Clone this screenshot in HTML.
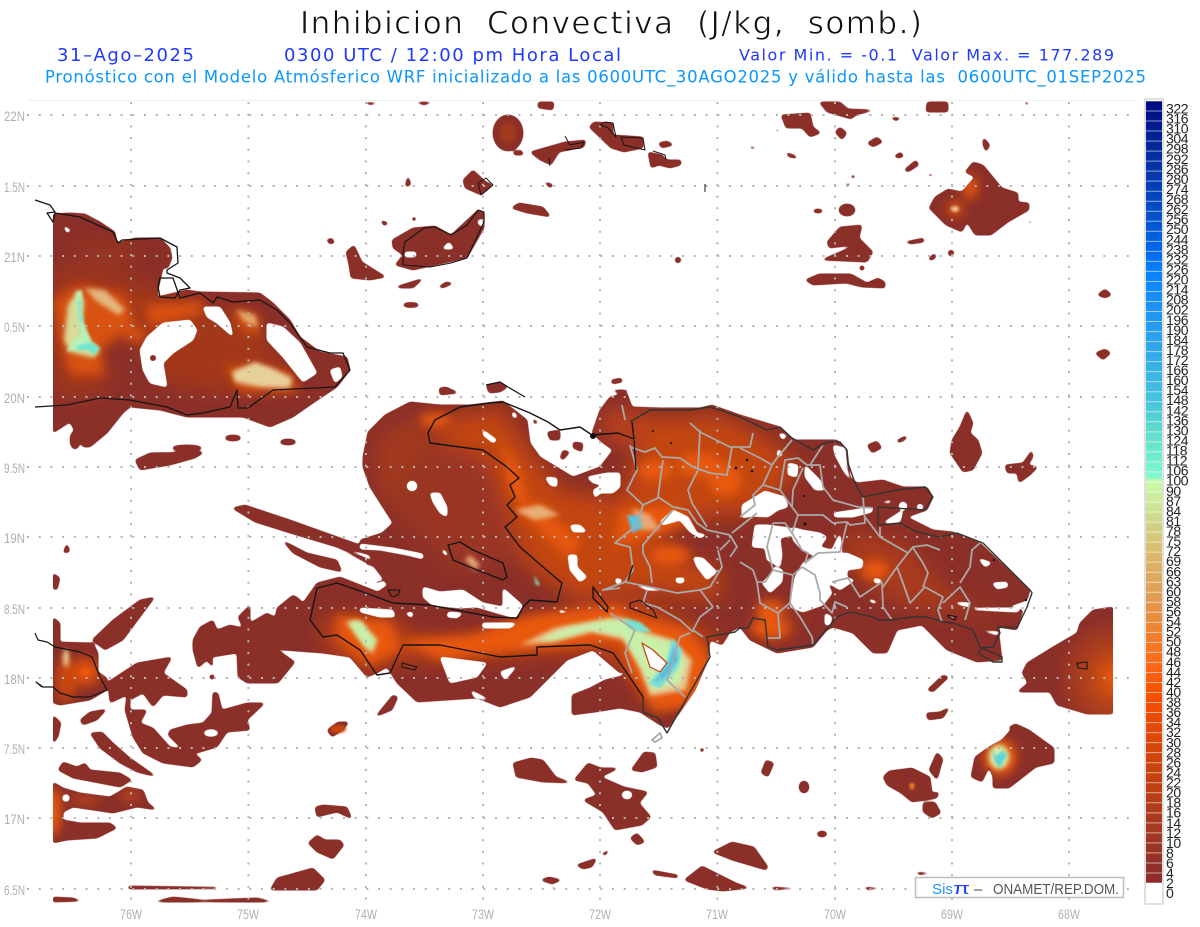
<!DOCTYPE html>
<html><head><meta charset="utf-8"><title>Inhibicion Convectiva</title>
<style>html,body{margin:0;padding:0;background:#fff}svg{display:block}text{font-family:"Liberation Sans",sans-serif;white-space:pre}.d{font-family:"DejaVu Sans",sans-serif}</style></head>
<body>
<svg width="1200" height="927" viewBox="0 0 1200 927" xmlns="http://www.w3.org/2000/svg">
<defs>
<filter id="sm" filterUnits="userSpaceOnUse" x="0" y="90" width="1200" height="830" color-interpolation-filters="sRGB"><feGaussianBlur stdDeviation="1.6"/><feComponentTransfer><feFuncA type="linear" slope="5" intercept="-1.4"/></feComponentTransfer></filter>
<filter id="b1" x="-30%" y="-30%" width="160%" height="160%"><feGaussianBlur stdDeviation="1.2"/></filter>
<filter id="b2" x="-30%" y="-30%" width="160%" height="160%"><feGaussianBlur stdDeviation="2.5"/></filter>
<filter id="b5" x="-30%" y="-30%" width="160%" height="160%"><feGaussianBlur stdDeviation="5"/></filter>
<filter id="b10" x="-30%" y="-30%" width="160%" height="160%"><feGaussianBlur stdDeviation="10"/></filter>
<clipPath id="plot"><rect x="53" y="101" width="1060" height="802"/></clipPath>
<linearGradient id="lg" gradientUnits="userSpaceOnUse" x1="0" y1="101" x2="0" y2="883">
<stop offset="0" stop-color="#000a80"/><stop offset=".064" stop-color="#052a9c"/><stop offset=".128" stop-color="#0448bf"/><stop offset=".192" stop-color="#0068e8"/><stop offset=".218" stop-color="#0a80ff"/><stop offset=".256" stop-color="#1a90f5"/><stop offset=".32" stop-color="#30a8ea"/><stop offset=".385" stop-color="#48c4dc"/><stop offset=".423" stop-color="#60dccc"/><stop offset=".48" stop-color="#80f8d0"/><stop offset=".487" stop-color="#ccfaa8"/><stop offset=".54" stop-color="#d0d488"/><stop offset=".577" stop-color="#dcba6c"/><stop offset=".64" stop-color="#e09a50"/><stop offset=".68" stop-color="#ee8030"/><stop offset=".72" stop-color="#fa6a18"/><stop offset=".756" stop-color="#f85000"/><stop offset=".808" stop-color="#e04808"/><stop offset=".872" stop-color="#c04010"/><stop offset=".923" stop-color="#a83a20"/><stop offset="1" stop-color="#8a2c2c"/>
</linearGradient>
<radialGradient id="pr" gradientUnits="userSpaceOnUse" cx="1116" cy="678" r="62"><stop offset="0" stop-color="#ea5a0a"/><stop offset=".45" stop-color="#b4421a"/><stop offset="1" stop-color="#8b2f29"/></radialGradient>
<path id="island" d="M363,457 368,432 385,415 410,402 440,405 470,405 503,401 527,420 530,443 540,457 573,477 600,467 613,450 603,443 592,433 600,410 610,397 627,393 632,407 660,408 700,408 712,405 740,415 780,427 793,440 837,440 847,450 850,477 857,483 883,480 903,487 927,487 933,497 927,510 907,517 933,530 953,532 980,543 1030,590 1027,600 1007,607 1023,610 1017,630 998,627 1002,660 977,662 947,650 922,625 897,630 887,653 873,653 853,633 833,627 827,630 813,647 777,653 750,640 740,627 730,632 722,645 710,640 708,660 695,690 680,712 668,728 660,725 640,712 620,708 595,712 572,715 572,695 590,688 605,680 622,676 628,670 620,673 593,650 567,660 550,677 530,697 500,707 477,698 417,702 397,683 387,667 377,673 367,677 350,657 323,653 283,650 277,647 273,630 277,608 293,595 298,598 303,603 317,583 340,577 378,592 388,585 375,570 370,555 360,552 360,540 382,533 393,523 370,487 363,467Z"/>
<path id="cuba" d="M53,214 70,213 85,214 100,222 115,232 117,243 135,238 160,238 170,248 172,258 168,268 163,268 158,290 157,297 187,290 200,292 260,293 273,303 290,320 300,337 320,352 347,357 350,370 337,387 313,403 293,417 270,427 243,417 187,417 160,410 130,407 123,413 107,433 90,447 83,447 70,422 53,433Z"/>
<path id="jam" d="M53,642 93,643 98,653 98,672 107,678 107,690 90,700 60,705 53,703Z"/>
<path id="ne" d="M965,172 973,162 983,165 1002,188 1018,193 1018,202 1029,203 1029,210 1008,222 991,235 975,235 967,222 962,232 946,225 929,208 935,197 948,189 962,192 975,177Z"/>
<path id="se" d="M1016,724 1029,730 1054,748 1054,763 1036,767 1009,788 993,788 993,777 989,767 982,782 971,777 975,757 989,747 1002,740Z"/>
<path id="sl" d="M53,782 63,788 80,793 110,797 127,787 143,790 148,803 157,810 137,807 113,813 73,807 63,812 63,820 80,823 110,823 117,828 97,838 67,840 53,843Z"/>
<clipPath id="ci"><use href="#island"/></clipPath>
<clipPath id="cc"><use href="#cuba"/></clipPath>
<clipPath id="cj"><use href="#jam"/></clipPath>
<clipPath id="cn"><use href="#ne"/></clipPath>
<clipPath id="cs"><use href="#se"/></clipPath>
<clipPath id="cl"><use href="#sl"/></clipPath>
</defs>

<rect width="1200" height="927" fill="#fff"/>

<!-- header -->
<text class="d" x="300" y="33.5" font-size="31" textLength="622" lengthAdjust="spacing" fill="#111" stroke="#fff" stroke-width=".7">Inhibicion  Convectiva  (J/kg,  somb.)</text>
<g font-size="18" fill="#2038ff" class="d">
<text class="d" x="57" y="61" textLength="137" lengthAdjust="spacing">31–Ago–2025</text>
<text class="d" x="284" y="61" textLength="337" lengthAdjust="spacing">0300 UTC / 12:00 pm Hora Local</text>
<text class="d" x="739" y="60.5" font-size="16" textLength="375" lengthAdjust="spacing">Valor Min. = -0.1  Valor Max. = 177.289</text>
</g>
<text class="d" x="45" y="82.5" font-size="16.5" fill="#0a96ff" textLength="1101" lengthAdjust="spacing">Pronóstico con el Modelo Atmósferico WRF inicializado a las 0600UTC_30AGO2025 y válido hasta las  0600UTC_01SEP2025</text>
<line x1="28" y1="100.5" x2="1136" y2="100.5" stroke="#f0f0f0"/>

<!-- base land -->
<g clip-path="url(#plot)">
<g filter="url(#sm)">
<g fill="#8b2f29">
<use href="#island"/><use href="#cuba"/><use href="#jam"/><use href="#ne"/><use href="#se"/><use href="#sl"/>
<path d="M232,508 245,505 290,520 360,545 360,552 340,548 290,533 255,522Z"/>
<path d="M282,540 307,553 337,560 342,572 320,567 293,553Z"/>
<path d="M320,540 363,557 397,573 377,583 367,563 337,547Z"/>
<path d="M135,460 150,453 205,452 195,458 170,465 140,470Z"/>
<path d="M53,617 60,623 60,642 53,642Z"/>
<path d="M53,573 60,578 57,590 53,589Z"/>
<path d="M67,543 70,552 63,553Z"/>
<path d="M92,640 113,620 140,600 155,597 143,613 123,640 105,650Z"/>
<path d="M108,682 137,663 172,657 163,673 187,690 187,697 163,695 153,707 143,693 130,700 130,710 147,710 140,723 153,728 170,747 190,750 202,760 193,767 163,763 143,753 133,737 125,710 127,695 110,703Z"/>
<path d="M80,720 90,712 107,709 97,720 83,725Z"/>
<path d="M53,715 61,723 58,737 53,744Z"/>
<path d="M90,733 102,732 113,743 130,758 157,777 137,772 120,763 100,748Z"/>
<path d="M170,730 187,725 203,723 212,713 213,692 218,693 222,710 247,703 265,703 247,720 250,730 227,732 217,747 197,753 180,747 168,735Z"/>
<path d="M193,640 200,627 213,620 217,630 230,625 243,628 238,617 250,605 250,623 267,613 280,620 272,633 278,650 295,662 278,683 247,683 238,677 237,653 212,657 213,668 207,660 198,668 193,650Z"/>
<path d="M58,770 63,762 77,767 85,763 90,770 120,773 132,780 120,787 73,778Z"/>
<path d="M315,807 323,805 347,807 352,819 337,812 317,817Z"/>
<path d="M308,843 317,835 325,840 340,840 344,845 333,859 317,852Z"/>
<path d="M270,890 277,878 313,868 325,880 317,890Z"/>
<path d="M128,886 217,887 217,889 128,889Z"/>
<path d="M53,897 73,898 83,901 53,902Z"/>
<path d="M152,902 173,897 203,900 257,898 275,902Z"/>
<path d="M327,730 338,722 349,722 343,730 332,737Z"/>
<path d="M375,717 393,695 398,697 392,710Z"/>
<path d="M547,432 560,430 560,440 550,440Z"/><path d="M563,450 570,452 563,460 560,458Z"/><path d="M573,442 583,443 582,452 573,448Z"/><path d="M532,418 538,422 535,425Z"/>
<!-- east -->
<path d="M967,410 973,423 970,433 978,440 982,453 973,470 963,472 950,453 952,440 960,427Z"/>
<path d="M867,445 877,441 882,448 872,453Z"/><path d="M897,440 908,435 905,440 898,443Z"/>
<path d="M1005,465 1023,463 1032,450 1033,457 1028,465 1038,467 1030,475 1019,483 1017,473 1007,473Z"/>
<path d="M927,690 943,675 949,677 933,692Z"/>
<path d="M926,713 940,712 950,707 943,718 928,720Z"/>
<path d="M1007,728 1015,724 1023,729Z"/>
<!-- south -->
<path d="M513,763 531,758 543,760 556,777 572,783 543,782 516,777Z"/>
<path d="M574,780 588,763 601,768 619,768 601,777 624,787 648,792 639,803 651,817 642,825 615,830 603,812 583,800 597,795 588,783Z"/>
<path d="M631,770 644,752 655,753 657,767 642,772Z"/>
<path d="M630,838 637,833 645,842 637,845Z"/>
<path d="M712,852 732,842 754,847 768,867 766,870 732,860Z"/>
<path d="M576,865 597,858 592,867 583,869Z"/><path d="M600,855 610,849 606,855Z"/>
<path d="M651,870 678,875 678,878 655,875Z"/>
<path d="M684,880 702,866 736,883 750,888 723,891 707,889Z"/>
<path d="M540,880 549,877 562,880 552,884Z"/><path d="M549,887 565,888 552,889Z"/>
<path d="M769,887 806,888 775,890Z"/><path d="M862,887 885,888 868,890Z"/><path d="M914,872 934,873 920,875Z"/>
<path d="M883,777 889,771 912,768 930,777 932,793 939,792 937,798 925,800 912,802 901,793 887,785Z"/>
<path d="M923,803 935,802 941,813 932,818 923,812Z"/>
<path d="M761,773 766,760 774,763 768,777Z"/>
<path d="M929,770 937,752 943,759 937,780Z"/>
<ellipse cx="804" cy="787" rx="5" ry="6"/><ellipse cx="822" cy="834" rx="5" ry="3"/><circle cx="702" cy="750" r="2"/><circle cx="212" cy="677" r="2.5"/>
<ellipse cx="75" cy="440" rx="5" ry="9"/><ellipse cx="233" cy="438" rx="8" ry="3"/><ellipse cx="288" cy="442" rx="8" ry="3"/><ellipse cx="187" cy="448" rx="15" ry="3"/>
<!-- north -->
<path d="M362,102 381,103 370,105Z"/><path d="M413,102 435,102 424,105Z"/><path d="M538,102 554,102 553,110 538,108Z"/>
<ellipse cx="508" cy="133" rx="15" ry="18"/>
<path d="M513,152 521,150 524,155 514,155Z"/>
<path d="M530,152 565,142 586,140 584,147 559,152 551,165 540,160Z"/>
<path d="M589,127 594,122 613,123 613,135 643,137 643,148 624,152 611,148Z"/>
<path d="M658,143 667,141 674,145 662,148Z"/>
<path d="M648,152 662,155 667,160 681,160 681,165 670,168 659,165 651,168Z"/>
<path d="M408,175 411,185 405,187Z"/>
<path d="M473,170 486,182 493,185 481,195 465,188 463,180Z"/>
<path d="M543,181 554,185 550,188Z"/>
<path d="M511,208 519,203 543,207 551,217 527,213Z"/>
<path d="M392,240 413,228 435,226 451,235 478,210 484,212 484,228 467,258 435,265 413,270 395,265 403,255 393,248Z"/>
<path d="M346,252 354,245 362,262 386,277 370,280 351,278 349,265Z"/>
<path d="M326,240 332,238 335,243 330,244Z"/>
<path d="M380,220 389,223 384,226Z"/><circle cx="414" cy="219" r="2"/>
<path d="M395,287 424,278 413,288 400,288Z"/>
<path d="M438,287 446,282 454,283 443,288Z"/>
<ellipse cx="411" cy="305" rx="8" ry="2.5"/>
<path d="M486,385 500,382 508,387 500,392 489,393Z"/>
<path d="M439,388 446,387 459,393 440,395Z"/>
<path d="M611,380 621,378 623,382 612,384Z"/><path d="M611,390 630,390 621,394Z"/>
<path d="M819,102 840,102 848,109 875,110 856,115 851,119 827,112Z"/>
<path d="M927,102 948,102 948,112 926,112Z"/>
<path d="M1024,102 1029,102 1027,106Z"/>
<path d="M889,117 902,118 896,121Z"/>
<path d="M781,115 810,113 813,127 821,133 810,137 802,128 786,128Z"/>
<path d="M773,129 781,130 778,132Z"/>
<path d="M835,132 840,127 847,133 842,140Z"/>
<path d="M867,143 877,137 883,142 873,147Z"/>
<path d="M749,146 759,148 751,149Z"/>
<path d="M785,152 794,155 799,159 789,157Z"/>
<path d="M894,156 901,152 904,157 897,158Z"/>
<path d="M904,170 916,160 919,165 908,172Z"/>
<path d="M928,174 935,174 929,177Z"/>
<path d="M850,177 854,174 855,179Z"/>
<path d="M845,184 851,183 848,187Z"/>
<path d="M983,137 990,145 986,152 983,145Z"/>
<path d="M1027,223 1034,219 1030,224Z"/>
<path d="M904,242 924,238 924,242 911,244Z"/>
<path d="M929,258 935,253 936,258 929,261Z"/>
<circle cx="951" cy="253" r="3"/>
<ellipse cx="847" cy="210" rx="8" ry="6"/><ellipse cx="818" cy="211" rx="5" ry="2"/>
<path d="M827,242 840,227 862,225 859,238 873,252 867,262 821,260 856,245 829,248Z"/>
<circle cx="862" cy="268" r="2.5"/>
<path d="M805,280 819,274 851,274 867,283 878,278 885,282 885,288 862,287 846,283 813,285Z"/>
<path d="M1097,295 1105,289 1112,295 1105,298Z"/>
<path d="M1095,353 1105,349 1111,353 1103,360Z"/>
<circle cx="678" cy="260" r="3"/>
</g>
<!-- Puerto Rico gradient lobe -->
<path d="M1113,607 1093,610 1080,623 1077,633 1053,647 1027,663 1022,673 1028,683 1017,692 1050,692 1057,705 1087,714 1113,714Z" fill="url(#pr)"/>
</g>

<!-- island heat -->
<g clip-path="url(#ci)">
<g filter="url(#b10)">
<path fill="#a63a1c" opacity=".55" d="M385,425 430,415 510,470 525,560 450,570 400,520Z"/>
<path fill="#c8470f" opacity=".92" d="M440,420 500,408 530,450 560,490 620,500 640,450 640,420 720,415 770,440 800,470 760,510 690,520 650,550 720,570 720,600 640,590 580,600 530,570 510,520 490,460 440,440Z"/>
<path fill="#c8470f" opacity=".9" d="M400,640 480,640 580,610 640,600 720,640 700,700 650,705 630,670 590,650 480,655 400,660Z"/>
<path fill="#c8470f" opacity=".9" d="M320,620 395,620 410,640 395,660 360,670 330,650Z"/>
<path fill="#a93b1a" d="M840,530 900,540 960,600 1000,620 900,605 850,570Z"/>
<path fill="#b8401a" d="M600,410 650,410 640,450 605,440Z"/>
<path fill="#a83a1c" d="M770,620 800,600 790,640 760,640Z"/>
<path fill="#a53a1c" d="M375,445 410,425 430,440 400,470 400,510 380,490Z"/>
</g>
<g filter="url(#b5)" fill="#e8590a">
<ellipse cx="435" cy="420" rx="16" ry="7"/>
<path d="M500,440 520,470 530,510 555,520 580,540 570,560 540,530 510,490Z"/>
<ellipse cx="535" cy="512" rx="16" ry="7"/>
<path d="M620,510 670,505 690,520 640,540 615,545Z"/>
<ellipse cx="700" cy="465" rx="22" ry="12"/><ellipse cx="655" cy="470" rx="18" ry="10"/><ellipse cx="725" cy="480" rx="16" ry="16"/>
<ellipse cx="670" cy="555" rx="20" ry="10"/><ellipse cx="770" cy="610" rx="14" ry="10"/><ellipse cx="770" cy="628" rx="20" ry="10"/>
<ellipse cx="875" cy="570" rx="14" ry="10"/>
<path d="M400,640 470,635 530,615 620,605 625,640 530,650 440,660Z"/>
<path d="M335,615 390,622 400,650 370,665 340,640Z"/>
<path d="M612,610 690,630 712,665 695,705 655,712 630,675Z"/>
</g>
<g filter="url(#b2)">
<path fill="#e8b078" d="M515,510 540,505 560,515 535,520Z"/>
<path fill="#e8a878" d="M470,555 480,565 475,570 465,560Z"/>
<path fill="#e8c890" d="M520,645 555,628 610,618 622,618 640,630 672,640 692,660 686,690 650,696 640,668 625,640 592,632 552,642Z"/>
<path fill="#d8dc98" d="M346,622 358,620 378,640 372,654 360,640Z"/>
<path fill="#e8a878" d="M632,508 650,515 660,530 640,530Z"/>
</g>
<g filter="url(#b2)">
<path fill="#c8f0a8" d="M540,640 565,628 610,620 625,620 645,635 672,642 686,662 680,684 652,690 640,666 622,636 590,630 555,640Z"/>
<path fill="#c8f0a8" d="M350,622 362,622 374,642 368,650 358,636Z"/>
</g>
<g filter="url(#b1)">
<path fill="#78e0d0" d="M625,618 640,622 652,632 640,632 628,628Z"/>
<path fill="#78dcd8" d="M672,638 682,650 678,668 660,688 648,684 666,664Z"/>
<path fill="#52bce0" d="M675,644 678,660 664,678 654,682 668,664Z"/>
<path fill="#58c4e0" d="M627,515 640,516 642,528 632,533 630,525Z"/>
<path fill="#78e8d0" d="M534,575 540,585 536,585Z"/>
</g>
</g>

<!-- Cuba heat -->
<g clip-path="url(#cc)">
<g filter="url(#b10)">
<path fill="#c8470f" opacity=".4" d="M53,270 130,280 210,310 250,320 300,385 235,392 170,385 130,330 100,340 110,390 60,395 53,360Z"/>
<path fill="#a93b1a" opacity=".5" d="M75,245 140,245 130,265 80,265Z"/>
</g>
<g filter="url(#b5)" fill="#ea5a0a" opacity=".75">
<path d="M53,300 80,285 125,295 135,325 100,350 105,375 70,375 60,340Z"/>
<path d="M145,305 205,300 200,315 150,326Z"/>
<path d="M225,365 290,372 300,392 240,392Z"/>
<path d="M232,308 260,315 258,338 240,328Z"/>
<ellipse cx="135" cy="335" rx="10" ry="8"/>
</g>
<g filter="url(#b2)">
<path fill="#e8c890" opacity=".85" d="M85,288 105,290 125,310 118,315 95,300Z"/>
<path fill="#e8d09a" d="M232,372 255,362 272,368 292,378 290,388 260,387 235,382Z"/>
<path fill="#e8b878" opacity=".85" d="M236,310 255,315 258,327 245,322Z"/>
<path fill="#d8dc98" d="M68,305 78,290 84,300 82,335 100,350 94,358 70,352 64,340Z"/>
</g>
<g filter="url(#b1)">
<path fill="#b8f0b8" d="M76,292 82,290 82,318 92,342 98,346 90,350 72,350 66,352 74,340 80,335 78,315Z"/>
<path fill="#70e8d0" d="M78,300 81,300 81,317 84,318 82,323 79,318Z"/>
<path fill="#70e8d0" d="M76,346 90,342 100,348 94,355 88,350 78,350Z"/>
</g>
</g>

<!-- other heat -->
<g clip-path="url(#cj)"><g filter="url(#b5)"><ellipse cx="85" cy="672" rx="16" ry="14" fill="#d84e10"/><ellipse cx="66" cy="680" rx="10" ry="22" fill="#c8470f"/></g><g filter="url(#b2)"><ellipse cx="66" cy="658" rx="3" ry="9" fill="#f0d090"/><ellipse cx="85" cy="672" rx="5" ry="4" fill="#f05c0a"/></g></g>
<g clip-path="url(#cl)"><g filter="url(#b5)"><ellipse cx="53" cy="812" rx="8" ry="24" fill="#ea5a0a"/><ellipse cx="85" cy="800" rx="14" ry="5" fill="#b8421a"/><ellipse cx="130" cy="795" rx="10" ry="6" fill="#b8421a"/></g></g>
<g clip-path="url(#cn)"><g filter="url(#b5)"><ellipse cx="970" cy="187" rx="8" ry="12" fill="#e0520c"/><ellipse cx="955" cy="209" rx="8" ry="8" fill="#d84e10"/></g><g filter="url(#b1)"><ellipse cx="955" cy="209" rx="4" ry="3" fill="#f0c080"/></g></g>
<g clip-path="url(#cs)"><g filter="url(#b5)"><ellipse cx="1000" cy="757" rx="16" ry="18" fill="#f0600a"/></g><g filter="url(#b2)"><ellipse cx="999" cy="757" rx="10" ry="12" fill="#d8ecA0"/></g><g filter="url(#b1)"><path d="M992,748 996,756 1003,750 1007,755 1000,768 995,762Z" fill="#60d4d8"/></g></g>
<ellipse cx="912" cy="786" rx="2.5" ry="3.5" fill="#f08020" filter="url(#b1)"/>
<ellipse cx="338" cy="729" rx="8" ry="4" fill="#c8470f" filter="url(#b1)"/>
<ellipse cx="508" cy="133" rx="8" ry="10" fill="#a33a1e" filter="url(#b2)"/>

<!-- holes -->
<g filter="url(#sm)" fill="#fff">
<path d="M483,430 497,440 493,443 483,435Z"/><path d="M512,410 518,417 513,418Z"/>
<circle cx="412" cy="486" r="5"/>
<path d="M430,493 440,493 447,507 447,517 440,513 433,502Z"/>
<path d="M448,460 457,461 452,462Z"/>
<path d="M545,477 557,478 557,487 550,485Z"/>
<path d="M587,477 607,473 620,473 620,487 613,493 600,493 595,498 593,490 603,485 593,483Z"/>
<path d="M570,525 580,525 587,532 573,532Z"/>
<path d="M568,555 577,555 577,567 587,577 580,582 570,570Z"/>
<path d="M442,548 447,553 448,557 443,553Z"/>
<path d="M423,587 440,592 463,590 483,603 503,607 503,588 520,603 523,607 515,618 497,613 477,607 460,608 432,605 423,597Z"/>
<path d="M482,623 517,623 510,628 483,628Z"/>
<path d="M448,612 463,613 457,618 447,617Z"/>
<path d="M405,613 413,612 412,618Z"/>
<path d="M360,608 393,610 395,617 380,617 360,612Z"/>
<path d="M558,610 572,612 560,613Z"/>
<path d="M360,563 373,567 383,580 373,582 360,578Z"/>
<path d="M360,544 393,548 423,554 423,559 407,555 380,550 360,549Z"/>
<path d="M615,578 623,580 617,585Z"/>
<path d="M630,583 647,587 670,592 647,590Z"/>
<path d="M660,522 673,510 688,517 697,533 707,535 700,538 690,532 680,520 663,525Z"/>
<path d="M693,557 703,558 717,572 707,580 697,567Z"/>
<path d="M675,578 685,578 683,583 677,583Z"/>
<path d="M742,505 755,497 765,491 785,497 788,507 778,510 768,517 752,516 742,518Z"/>
<path d="M755,525 768,525 790,528 793,535 780,538 782,555 780,567 767,560 765,548 752,547Z"/>
<path d="M792,527 802,530 820,533 827,537 820,547 832,550 840,533 842,552 813,555 802,550 793,540Z"/>
<path d="M813,557 847,553 863,560 862,568 847,570 847,578 855,580 840,590 827,582 832,593 823,605 803,612 790,607 795,577 803,563Z"/>
<path d="M773,567 783,570 782,582 770,593 762,583 773,572Z"/>
<path d="M805,465 820,480 825,490 815,490 805,477Z"/>
<path d="M788,463 798,465 797,477 788,475Z"/>
<path d="M778,448 783,455 777,457Z"/><path d="M778,433 787,435 783,440Z"/>
<path d="M833,445 845,448 847,470 852,483 843,470 835,455Z"/>
<path d="M833,513 873,507 872,512 853,517 835,517Z"/>
<path d="M877,503 892,500 890,503Z"/>
<path d="M883,523 903,510 900,522 893,523Z"/>
<circle cx="903" cy="506" r="4"/><circle cx="920" cy="507" r="3"/>
<path d="M992,583 1007,582 1008,587 997,589Z"/>
<path d="M978,558 992,563 985,567Z"/>
<path d="M953,602 970,603 970,607 960,605Z"/>
<path d="M972,608 1022,608 1017,612 975,610Z"/>
<path d="M978,630 1000,632 997,635Z"/>
<path d="M867,598 880,603 872,603Z"/>
<path d="M873,578 882,580 880,583 875,583Z"/>
<path d="M825,613 832,617 830,625 825,625Z"/>
<path d="M440,657 487,663 477,677 450,683Z"/>
<path d="M500,672 517,666 505,680Z"/>
<path d="M470,690 490,700 475,698Z"/>
<path d="M140,350 147,337 163,323 190,320 197,330 193,340 173,353 163,363 167,387 150,383 143,370Z"/>
<path d="M203,307 220,307 230,323 233,337 217,323 207,317Z"/>
<path d="M267,323 283,327 300,343 317,373 303,382 283,357 267,340Z"/>
<path d="M330,370 340,367 342,377 335,383Z"/>
<path d="M160,288 168,286 166,292Z"/>
<path d="M63,225 70,230 74,228 67,233Z"/>
<circle cx="66" cy="798" r="3.5"/>
<ellipse cx="211" cy="733" rx="7" ry="3.2"/>
<ellipse cx="627" cy="795" rx="5" ry="4"/>
<path d="M442,249 449,242 454,249Z M405,252 416,252 416,257 405,257Z M477,222 482,218 483,228Z"/>
</g>
<circle cx="153" cy="358" r="3" fill="#8b2f29"/>
<path d="M642,643 653,650 667,663 660,672 650,667Z" fill="#fff" stroke="#c8400c" stroke-width="1.2" stroke-linejoin="round"/>
</g>

<!-- grid -->
<g stroke="#b4b4b4" stroke-width="2" stroke-dasharray="2 9.7" fill="none">
<path d="M27,115H1136M27,186H1136M27,256H1136M27,326H1136M27,397H1136M27,467H1136M27,537H1136M27,608H1136M27,678H1136M27,748H1136M27,818H1136M27,889H1136"/>
<path d="M131,102V905M248.4,102V905M366,102V905M483,102V905M600,102V905M717.4,102V905M835,102V905M952,102V905M1069,102V905"/>
</g>

<!-- provinces -->
<g fill="none" stroke="#a9a9a9" stroke-width="1.8" stroke-linejoin="round">
<path d="M630,445 637,470 627,490 643,505 637,525 615,543 630,547 633,570 625,582 603,590"/>
<path d="M630,447 645,452 655,448 662,457 680,458 693,467 710,473 727,475 732,447"/>
<path d="M663,460 658,497 673,507 688,510 697,523 707,530 730,535"/>
<path d="M700,430 698,470 688,490 692,503 707,527"/>
<path d="M690,423 700,432 730,447 750,447 753,433"/>
<path d="M643,505 658,498"/>
<path d="M673,510 653,533 643,545 643,553 650,567 652,583"/>
<path d="M625,582 650,587 677,593 700,590 713,607"/>
<path d="M730,535 737,547 730,557"/>
<path d="M718,550 722,567 710,587 700,590"/><path d="M730,540 720,550"/><path d="M732,533 757,513"/>
<path d="M713,607 700,617 693,630 703,637"/>
<path d="M647,590 643,603 657,607 680,620 693,632"/>
<path d="M610,613 635,630 625,653 632,673"/>
<path d="M690,633 680,637 667,680 685,697"/>
<path d="M602,590 620,588"/>
<path d="M625,420 622,405"/>
<path d="M740,448 760,458 772,465 763,485 753,495 755,505 740,517"/>
<path d="M792,440 777,458 772,465"/>
<path d="M763,485 780,490 785,460 798,458 807,465 820,465 823,487 833,500 858,507 873,508"/>
<path d="M823,445 810,465"/>
<path d="M803,468 793,490 792,507 798,515 823,515 833,523 847,522 850,525 865,523 863,497"/>
<path d="M798,515 792,533 802,550 808,553 805,563 818,553 840,552 847,523"/>
<path d="M780,490 792,507"/>
<path d="M773,523 767,547 773,570 765,582 757,582 753,570 740,562"/>
<path d="M773,523 785,523 792,533"/>
<path d="M773,570 793,575 790,603 778,613 760,603 757,582"/>
<path d="M778,613 780,638 767,638"/>
<path d="M802,567 793,575"/>
<path d="M802,567 815,575 820,593 820,600 832,613 835,602 847,607"/>
<path d="M790,603 800,617 812,637 813,645"/>
<path d="M832,582 848,578 860,597 882,582 883,607 892,620"/>
<path d="M865,517 880,537 908,553 897,567 883,587"/>
<path d="M880,527 880,537"/>
<path d="M897,567 903,583 910,603 925,587 943,597 938,610 942,622"/>
<path d="M908,553 913,547 927,545 940,550"/>
<path d="M913,548 923,563 928,573 923,587"/>
<path d="M943,603 960,587 970,603 965,620"/>
<path d="M960,583 970,567 972,550 980,543"/>
<path d="M652,740 660,733 662,738 655,742Z"/>
</g>

<!-- coasts -->
<g fill="none" stroke="#151515" stroke-width="1.4" stroke-linejoin="round">
<path stroke="#333" d="M630,422 650,410 690,410 710,407 720,410 740,417 767,430 780,427 792,438 813,450 827,442 840,442 847,450 848,463 855,483 863,497 897,490 925,487 933,497 925,510 878,507 878,525 900,523 917,532 940,537 957,533 983,543 1030,590 1032,593 1027,607 1017,628 998,627 1000,633 993,647 982,648 978,653 993,662 1002,662 1002,657 980,647 973,630 953,623 943,622 927,617 913,617 890,620 878,620 873,617 850,612 837,617 813,645 777,650 768,647 765,620 753,618 748,628 740,628 735,632 707,637 710,657 680,710 667,733 658,718 643,712 643,697"/>
<path d="M643,697 627,673 613,653 590,645 537,647 537,655 500,657 440,645 403,645 390,673 377,675 360,650 337,635 323,637 310,620 317,588 337,583 363,592 393,603 430,605 440,607 493,617 517,618 523,607 530,600 557,602 562,583 550,573 520,547 505,527 517,517 507,505 515,497 510,485 519,478 507,467 483,450 460,447 430,443 428,433 435,420 460,407 490,403 503,402 530,413 548,422 560,430 580,427 592,435 618,433 634,439 632,422"/>
<path d="M634,440 636,470" stroke-width="1.2"/><path d="M633,565 628,580" stroke-width="1.2"/>
<path d="M448,545 460,542 473,550 503,563 507,577 503,580 477,570 453,560Z"/>
<path d="M593,587 608,607 607,612 593,598Z"/>
<path d="M630,608 657,618 653,610 640,600 630,603Z" stroke-width="1.1"/>
<path d="M388,590 400,590 398,595 392,597Z" stroke-width="1.1"/>
<path d="M402,663 417,667 415,670 402,667Z" stroke-width="1.1"/>
<path d="M948,615 957,617 955,620 948,617Z" stroke-width="1.1"/>
<path d="M1077,663 1087,662 1087,669 1078,668Z" stroke-width="1.1"/>
<path d="M35,200 50,205 55,212 47,213 53,222 55,213 80,217 113,232 118,243 122,240 160,238 177,247 178,263 167,270 167,273 180,278 190,288 180,290 175,298 160,297 158,287 160,278 173,278 180,298 200,293 213,303 217,297 233,302 260,300 277,310 290,323 307,347 330,353 343,353 350,370 335,387 273,390 248,408 238,408 237,390 230,407 203,413 187,415 167,407 130,400 100,398 67,405 35,407" stroke-width="1.3"/>
<path d="M405,242 424,228 435,227 451,235 467,225 478,210 484,212 484,222 467,258 451,263 430,267 403,265 403,252 405,242Z" stroke-width="1.1"/>
<path d="M478,183 486,178 493,185 481,195Z" stroke-width="1"/>
<path d="M565,136 570,145 584,142 581,148 565,150" stroke-width="1"/>
<path d="M600,125 605,122 613,123 616,137 608,128Z" stroke-width="1"/>
<path d="M621,137 643,138 645,150 624,145Z" stroke-width="1"/>
<path d="M653,151 665,155 666,160" stroke-width="1"/>
<path d="M549,158 550,166" stroke-width="1"/><path d="M705,184 705,192" stroke-width="1"/>
<path d="M35,633 38,640 47,642 55,647 80,652 92,657 100,677 107,690 90,697 73,697 60,693 53,687 43,687 36,682 42,687" stroke-width="1.2"/>
<path d="M486,385 500,382 508,387 525,397" stroke-width="1.2"/>
</g>
<g fill="#111"><circle cx="593" cy="436" r="3"/><circle cx="653" cy="431" r="1"/><circle cx="671" cy="443" r="1"/><circle cx="747" cy="460" r="1.3"/><circle cx="736" cy="468" r="1.3"/><circle cx="752" cy="471" r="1.3"/><circle cx="804" cy="496" r="1"/><circle cx="805" cy="524" r="1.5"/><circle cx="994" cy="560" r="1.2"/><circle cx="1026" cy="600" r="1.2"/></g>

<!-- axis labels -->
<g fill="#b0b0b0" font-size="14">
<text x="4" y="121" textLength="21" lengthAdjust="spacingAndGlyphs">22N</text>
<text x="4" y="192" textLength="21" lengthAdjust="spacingAndGlyphs">1.5N</text>
<text x="4" y="262" textLength="21" lengthAdjust="spacingAndGlyphs">21N</text>
<text x="4" y="332" textLength="21" lengthAdjust="spacingAndGlyphs">0.5N</text>
<text x="4" y="403" textLength="21" lengthAdjust="spacingAndGlyphs">20N</text>
<text x="4" y="473" textLength="21" lengthAdjust="spacingAndGlyphs">9.5N</text>
<text x="4" y="543" textLength="21" lengthAdjust="spacingAndGlyphs">19N</text>
<text x="4" y="614" textLength="21" lengthAdjust="spacingAndGlyphs">8.5N</text>
<text x="4" y="684" textLength="21" lengthAdjust="spacingAndGlyphs">18N</text>
<text x="4" y="754" textLength="21" lengthAdjust="spacingAndGlyphs">7.5N</text>
<text x="4" y="824" textLength="21" lengthAdjust="spacingAndGlyphs">17N</text>
<text x="4" y="895" textLength="21" lengthAdjust="spacingAndGlyphs">6.5N</text>
<text x="120" y="919" textLength="22" lengthAdjust="spacingAndGlyphs">76W</text>
<text x="237" y="919" textLength="22" lengthAdjust="spacingAndGlyphs">75W</text>
<text x="355" y="919" textLength="22" lengthAdjust="spacingAndGlyphs">74W</text>
<text x="472" y="919" textLength="22" lengthAdjust="spacingAndGlyphs">73W</text>
<text x="589" y="919" textLength="22" lengthAdjust="spacingAndGlyphs">72W</text>
<text x="706" y="919" textLength="22" lengthAdjust="spacingAndGlyphs">71W</text>
<text x="824" y="919" textLength="22" lengthAdjust="spacingAndGlyphs">70W</text>
<text x="941" y="919" textLength="22" lengthAdjust="spacingAndGlyphs">69W</text>
<text x="1058" y="919" textLength="22" lengthAdjust="spacingAndGlyphs">68W</text>
</g>

<!-- credit box -->
<rect x="915.5" y="877.5" width="208" height="20" fill="#fff" stroke="#bdbdbd" stroke-width="1.5"/>
<text x="932" y="894" font-size="15" fill="#1e90ff" textLength="21" lengthAdjust="spacingAndGlyphs">Sis</text>
<text x="953" y="894" font-size="17" fill="#2040ff" textLength="17" lengthAdjust="spacingAndGlyphs">π</text>
<text x="974" y="894" font-size="15" fill="#444">–</text>
<text x="993" y="894" font-size="15" fill="#555" textLength="126" lengthAdjust="spacingAndGlyphs">ONAMET/REP.DOM.</text>

<!-- legend -->
<rect x="1145" y="99" width="18" height="805" fill="#fff" stroke="#d8d8d8" stroke-width="1.6"/>
<rect x="1146" y="101" width="16" height="782" fill="url(#lg)"/>
<line x1="1154" y1="101" x2="1154" y2="883" stroke="#fff" stroke-opacity=".55" stroke-width="16" stroke-dasharray="1 9.026" stroke-dashoffset="-9.5"/>
<text font-size="14" fill="#222" letter-spacing="-.4"><tspan x="1166" y="113.5">322</tspan><tspan x="1166" y="123.6">316</tspan><tspan x="1166" y="133.6">310</tspan><tspan x="1166" y="143.7">304</tspan><tspan x="1166" y="153.7">298</tspan><tspan x="1166" y="163.8">292</tspan><tspan x="1166" y="173.9">286</tspan><tspan x="1166" y="183.9">280</tspan><tspan x="1166" y="194">274</tspan><tspan x="1166" y="204">268</tspan><tspan x="1166" y="214.1">262</tspan><tspan x="1166" y="224.2">256</tspan><tspan x="1166" y="234.2">250</tspan><tspan x="1166" y="244.3">244</tspan><tspan x="1166" y="254.3">238</tspan><tspan x="1166" y="264.4">232</tspan><tspan x="1166" y="274.5">226</tspan><tspan x="1166" y="284.5">220</tspan><tspan x="1166" y="294.6">214</tspan><tspan x="1166" y="304.6">208</tspan><tspan x="1166" y="314.7">202</tspan><tspan x="1166" y="324.8">196</tspan><tspan x="1166" y="334.8">190</tspan><tspan x="1166" y="344.9">184</tspan><tspan x="1166" y="354.9">178</tspan><tspan x="1166" y="365">172</tspan><tspan x="1166" y="375.1">166</tspan><tspan x="1166" y="385.1">160</tspan><tspan x="1166" y="395.2">154</tspan><tspan x="1166" y="405.2">148</tspan><tspan x="1166" y="415.3">142</tspan><tspan x="1166" y="425.4">136</tspan><tspan x="1166" y="435.4">130</tspan><tspan x="1166" y="445.5">124</tspan><tspan x="1166" y="455.5">118</tspan><tspan x="1166" y="465.6">112</tspan><tspan x="1166" y="475.7">106</tspan><tspan x="1166" y="485.7">100</tspan><tspan x="1166" y="495.8">90</tspan><tspan x="1166" y="505.8">87</tspan><tspan x="1166" y="515.9">84</tspan><tspan x="1166" y="526">81</tspan><tspan x="1166" y="536">78</tspan><tspan x="1166" y="546.1">75</tspan><tspan x="1166" y="556.1">72</tspan><tspan x="1166" y="566.2">69</tspan><tspan x="1166" y="576.3">66</tspan><tspan x="1166" y="586.3">63</tspan><tspan x="1166" y="596.4">60</tspan><tspan x="1166" y="606.4">58</tspan><tspan x="1166" y="616.5">56</tspan><tspan x="1166" y="626.6">54</tspan><tspan x="1166" y="636.6">52</tspan><tspan x="1166" y="646.7">50</tspan><tspan x="1166" y="656.7">48</tspan><tspan x="1166" y="666.8">46</tspan><tspan x="1166" y="676.9">44</tspan><tspan x="1166" y="686.9">42</tspan><tspan x="1166" y="697">40</tspan><tspan x="1166" y="707">38</tspan><tspan x="1166" y="717.1">36</tspan><tspan x="1166" y="727.2">34</tspan><tspan x="1166" y="737.2">32</tspan><tspan x="1166" y="747.3">30</tspan><tspan x="1166" y="757.3">28</tspan><tspan x="1166" y="767.4">26</tspan><tspan x="1166" y="777.5">24</tspan><tspan x="1166" y="787.5">22</tspan><tspan x="1166" y="797.6">20</tspan><tspan x="1166" y="807.6">18</tspan><tspan x="1166" y="817.7">16</tspan><tspan x="1166" y="827.8">14</tspan><tspan x="1166" y="837.8">12</tspan><tspan x="1166" y="847.9">10</tspan><tspan x="1166" y="857.9">8</tspan><tspan x="1166" y="868">6</tspan><tspan x="1166" y="878.1">4</tspan><tspan x="1166" y="888.1">2</tspan><tspan x="1166" y="898.2">0</tspan></text>
</svg>
</body></html>
